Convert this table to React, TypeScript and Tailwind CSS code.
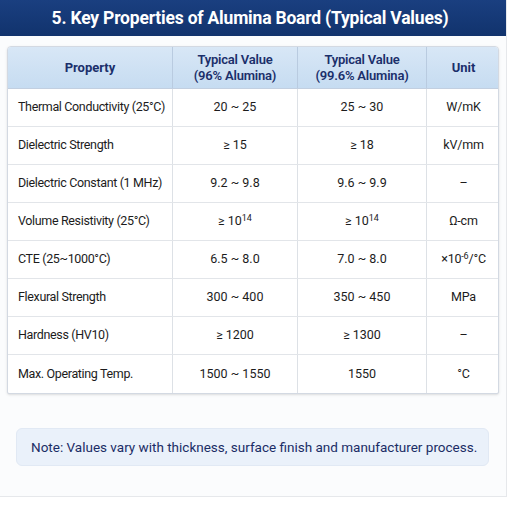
import React from 'react';

type Row = { prop: string; a: React.ReactNode; b: React.ReactNode; unit: React.ReactNode };

const rows: Row[] = [
  { prop: 'Thermal Conductivity (25°C)', a: '20 ~ 25', b: '25 ~ 30', unit: 'W/mK' },
  { prop: 'Dielectric Strength', a: '≥ 15', b: '≥ 18', unit: 'kV/mm' },
  { prop: 'Dielectric Constant (1 MHz)', a: '9.2 ~ 9.8', b: '9.6 ~ 9.9', unit: '–' },
  {
    prop: 'Volume Resistivity (25°C)',
    a: <>≥ 10<sup className="text-[9px]">14</sup></>,
    b: <>≥ 10<sup className="text-[9px]">14</sup></>,
    unit: 'Ω-cm',
  },
  {
    prop: 'CTE (25~1000°C)',
    a: '6.5 ~ 8.0',
    b: '7.0 ~ 8.0',
    unit: <>×10<sup className="text-[9px]">-6</sup>/°C</>,
  },
  { prop: 'Flexural Strength', a: '300 ~ 400', b: '350 ~ 450', unit: 'MPa' },
  { prop: 'Hardness (HV10)', a: '≥ 1200', b: '≥ 1300', unit: '–' },
  { prop: 'Max. Operating Temp.', a: '1500 ~ 1550', b: '1550', unit: '°C' },
];

const cols = 'grid grid-cols-[165px_125px_129px_73px]';

const App = () => {
  return (
    <div className="w-[512px] h-[512px] bg-white" style={{ fontFamily: 'Roboto, "Liberation Sans", sans-serif' }}>
      <div className="w-[507px] h-[497px] bg-[#fbfcfd] border-r border-b border-[#e6e8eb] flex flex-col">
        {/* Title bar */}
        <div className="h-[36px] bg-gradient-to-b from-[#1a3f80] to-[#11336d] flex items-center justify-center">
          <h1 className="text-white font-bold text-[17.5px] tracking-[-0.2px] pr-[6px]">
            5. Key Properties of Alumina Board (Typical Values)
          </h1>
        </div>

        {/* Table */}
        <div className="pl-[7px] pt-[10px]">
          <div className="w-[492px] border border-[#d3d9e2] rounded-t-[4px] rounded-b-[2px] bg-white shadow-sm overflow-hidden">
            <div className={`${cols} h-[42px] bg-gradient-to-b from-[#d8e7f6] to-[#c6dcf1] text-[#1b2f6b] font-bold text-[13px] leading-[16px] border-b border-[#c2cfe0]`}>
              <div className="flex items-center justify-center border-r border-[#b9cbe0]">Property</div>
              <div className="flex flex-col items-center justify-center border-r border-[#b9cbe0] font-semibold tracking-[-0.2px]">
                <span>Typical Value</span>
                <span>(96% Alumina)</span>
              </div>
              <div className="flex flex-col items-center justify-center border-r border-[#b9cbe0] font-semibold tracking-[-0.2px]">
                <span>Typical Value</span>
                <span>(99.6% Alumina)</span>
              </div>
              <div className="flex items-center justify-center">Unit</div>
            </div>
            {rows.map((r, i) => (
              <div
                key={r.prop}
                className={`${cols} h-[38px] text-[12.5px] text-[#1c1c1c] whitespace-nowrap ${i < rows.length - 1 ? 'border-b border-[#e2e5e9]' : ''}`}
              >
                <div className="flex items-center pl-[10px] border-r border-[#dde1e6] tracking-[-0.35px]">{r.prop}</div>
                <div className="flex items-center justify-center border-r border-[#dde1e6]">
                  <span>{r.a}</span>
                </div>
                <div className="flex items-center justify-center border-r border-[#dde1e6]">
                  <span>{r.b}</span>
                </div>
                <div className="flex items-center justify-center tracking-[-0.2px]">
                  <span>{r.unit}</span>
                </div>
              </div>
            ))}
          </div>
        </div>

        {/* Note */}
        <div className="pl-[16px] pt-[34px]">
          <div className="w-[473px] h-[38px] rounded-[6px] bg-[#eaf1fa] border border-[#e1e9f4] flex items-center pl-[14px] text-[13.5px] text-[#1b2d66] whitespace-nowrap">
            Note: Values vary with thickness, surface finish and manufacturer process.
          </div>
        </div>
      </div>
    </div>
  );
};

export default App;
